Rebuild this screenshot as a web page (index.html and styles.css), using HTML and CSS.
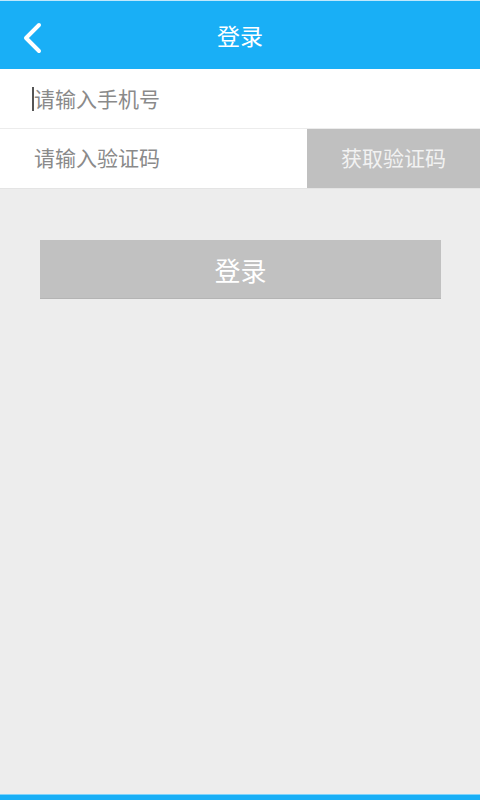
FILE: index.html
```html
<!DOCTYPE html>
<html lang="zh">
<head>
<meta charset="utf-8">
<title>登录</title>
<link rel="stylesheet" href="styles.css">
</head>
<body>
<div class="app">
  <header class="topbar">
    <div class="back">
      <svg width="22" height="32" viewBox="0 0 22 32"><path d="M17 3 L4 16 L17 29" fill="none" stroke="#fff" stroke-width="4" stroke-linecap="round" stroke-linejoin="round"/></svg>
    </div>
    <div class="title">登录</div>
  </header>
  <div class="form">
    <div class="row row-phone">
      <span class="caret"></span><span class="placeholder">请输入手机号</span>
    </div>
    <div class="row row-code">
      <span class="placeholder code-ph">请输入验证码</span>
      <div class="get-code">获取验证码</div>
    </div>
  </div>
  <main class="content">
    <div class="login-btn">登录</div>
  </main>
  <div class="bottom-bar"></div>
</div>
</body>
</html>
```
FILE: styles.css
```css
html, body {
  margin: 0;
  padding: 0;
}
body {
  font-family: "Noto Sans CJK SC", "Noto Sans", sans-serif;
  background: #ededed;
}
.app {
  width: 480px;
  height: 800px;
  display: flex;
  flex-direction: column;
  background: #ededed;
}
.topbar {
  height: 68px;
  border-top: 1px solid #bfe8fc;
  background: #19aff6;
  display: flex;
  align-items: center;
  justify-content: center;
  position: relative;
  flex: none;
}
.back {
  position: absolute;
  left: 22px;
  top: 21px;
  width: 22px;
  height: 32px;
  display: flex;
}
.title {
  color: #fff;
  font-size: 23px;
  line-height: 1;
  margin-top: 1px;
}
.form {
  background: #fff;
  flex: none;
}
.row {
  height: 59px;
  display: flex;
  align-items: center;
}
.row-phone {
  border-bottom: 1px solid #ececec;
  padding-left: 32px;
}
.row-code {
  border-bottom: 1px solid #e4e4e4;
}
.caret {
  width: 2px;
  height: 24px;
  background: #555;
}
.placeholder {
  color: #8a8a8a;
  font-size: 21px;
  line-height: 1;
}
.code-ph {
  padding-left: 34px;
  margin-top: -2px;
  flex: 1;
}
.get-code {
  width: 173px;
  height: 59px;
  box-sizing: border-box;
  padding-bottom: 3px;
  background: #c0c0c0;
  color: #f2f2f2;
  font-size: 21px;
  display: flex;
  align-items: center;
  justify-content: center;
}
.content {
  flex: 1;
  padding: 51px 39px 0 40px;
}
.login-btn {
  height: 58px;
  background: #c1c1c1;
  border-bottom: 1px solid #b4b4b4;
  color: #fff;
  font-size: 26px;
  display: flex;
  align-items: center;
  justify-content: center;
}
.bottom-bar {
  height: 5px;
  border-top: 1px solid #7fd3fb;
  background: #19aff6;
  flex: none;
}
```
